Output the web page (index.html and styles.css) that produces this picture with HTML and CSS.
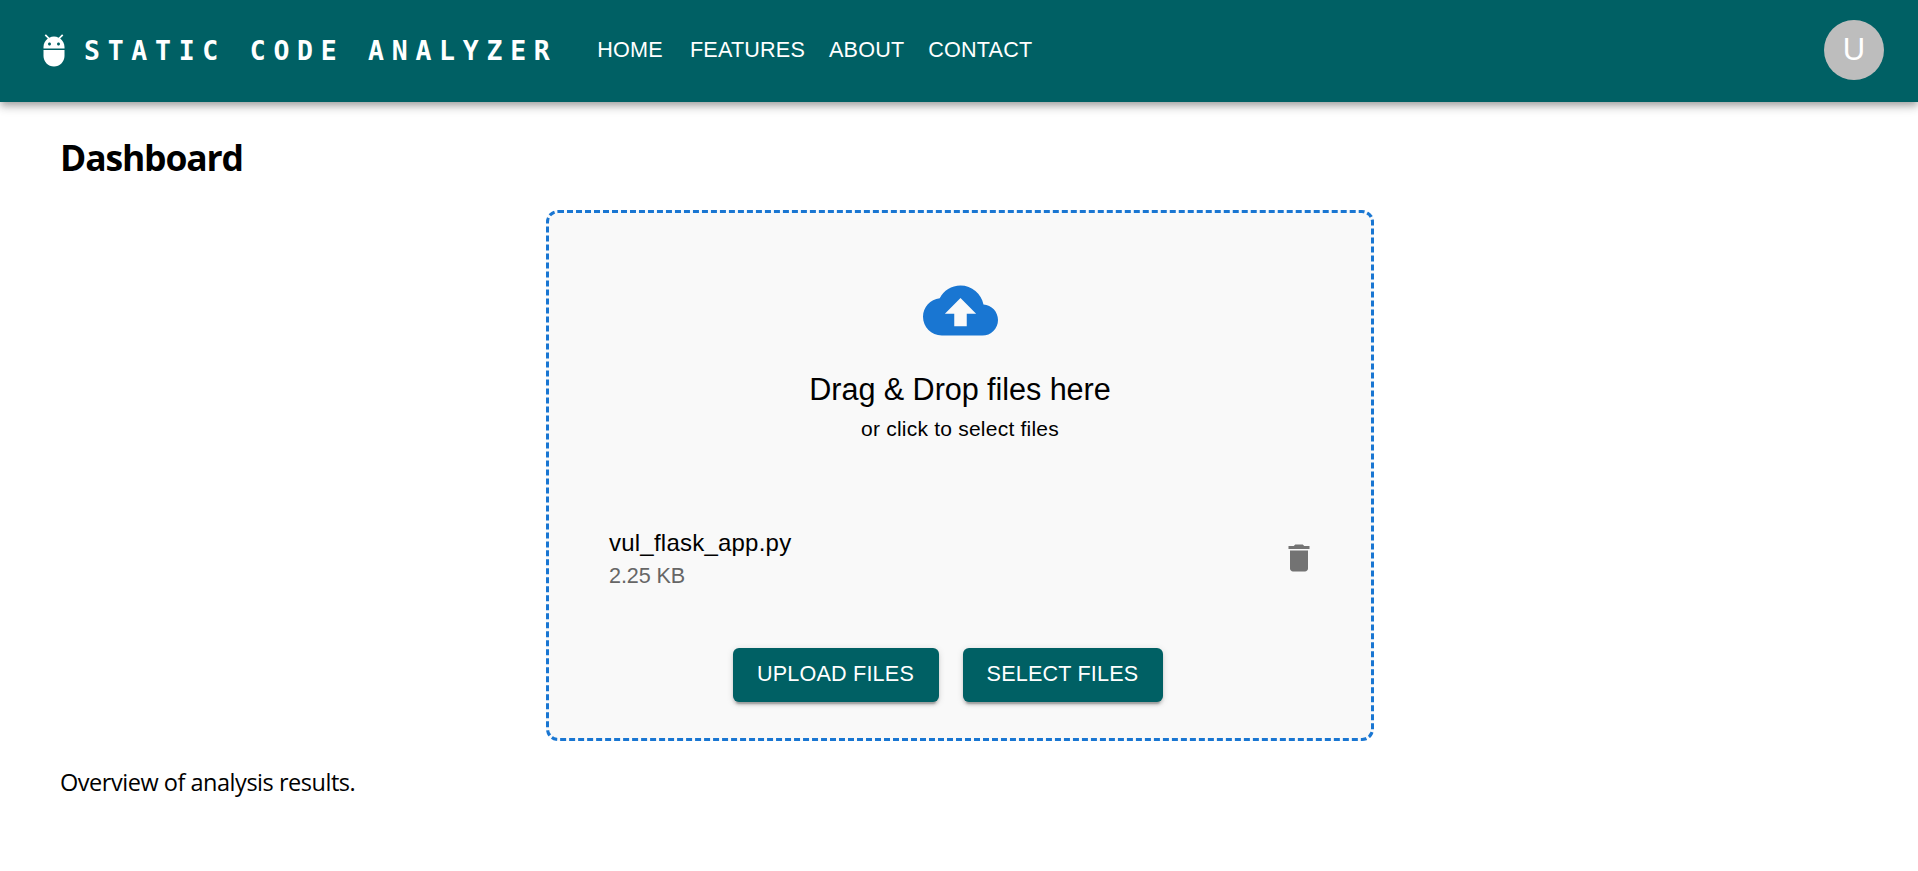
FILE: index.html
```html
<!DOCTYPE html>
<html lang="en">
<head>
<meta charset="utf-8">
<title>Static Code Analyzer</title>
<link rel="stylesheet" href="styles.css">
</head>
<body>
<header class="appbar">
  <svg class="logo-icon" viewBox="0 0 24 24"><path d="M5 16c0 3.87 3.13 7 7 7s7-3.13 7-7v-4H5v4zM16.12 4.37l2.1-2.1-.82-.83-2.3 2.31C14.16 3.28 13.12 3 12 3s-2.16.28-3.09.75L6.6 1.44l-.82.83 2.1 2.1C6.14 5.64 5 7.68 5 10v1h14v-1c0-2.32-1.14-4.36-2.88-5.63zM9 9c-.55 0-1-.45-1-1s.45-1 1-1 1 .45 1 1-.45 1-1 1zm6 0c-.55 0-1-.45-1-1s.45-1 1-1 1 .45 1 1-.45 1-1 1z"/></svg>
  <a class="brand">STATIC CODE ANALYZER</a>
  <nav class="nav">
    <a class="nav-link">HOME</a>
    <a class="nav-link">FEATURES</a>
    <a class="nav-link">ABOUT</a>
    <a class="nav-link">CONTACT</a>
  </nav>
  <div class="avatar">U</div>
</header>
<main class="content">
  <h1 class="title">Dashboard</h1>
  <section class="dropzone">
    <svg class="cloud" viewBox="0 0 24 24"><path d="M19.35 10.04C18.67 6.59 15.64 4 12 4 9.11 4 6.6 5.64 5.35 8.04 2.34 8.36 0 10.91 0 14c0 3.31 2.69 6 6 6h13c2.76 0 5-2.24 5-5 0-2.64-2.05-4.78-4.65-4.96zM14 13v4h-4v-4H7l5-5 5 5h-3z"/></svg>
    <p class="drop-title">Drag &amp; Drop files here</p>
    <p class="drop-hint">or click to select files</p>
    <div class="file">
      <div class="file-text">
        <div class="file-name">vul_flask_app.py</div>
        <div class="file-size">2.25 KB</div>
      </div>
      <svg class="trash" viewBox="0 0 24 24"><path d="M6 19c0 1.1.9 2 2 2h8c1.1 0 2-.9 2-2V7H6v12zM19 4h-3.5l-1-1h-5l-1 1H5v2h14V4z"/></svg>
    </div>
    <div class="actions">
      <button class="btn btn-upload">UPLOAD FILES</button>
      <button class="btn btn-select">SELECT FILES</button>
    </div>
  </section>
  <p class="overview">Overview of analysis results.</p>
</main>
</body>
</html>
```
FILE: styles.css
```css
* { box-sizing: border-box; }
body {
  margin: 0;
  background: #fff;
  color: #000;
  font-family: "Liberation Sans", Arial, sans-serif;
  overflow: hidden;
}
p, h1 { margin: 0; }
.appbar {
  display: flex;
  align-items: center;
  height: 102px;
  padding: 0 34px 2px 36px;
  background: #006064;
  color: #fff;
  box-shadow: 0 3px 6px -1.5px rgba(0,0,0,.2), 0 6px 7.5px 0 rgba(0,0,0,.14), 0 1.5px 15px 0 rgba(0,0,0,.12);
}
.logo-icon { width: 36px; height: 36px; margin-right: 12px; fill: #fff; }
.brand {
  width: 474px;
  margin-right: 24px;
  padding-top: 2px;
  font: 700 26.5px/48px "DejaVu Sans Mono", monospace;
  letter-spacing: 7.72px;
  white-space: nowrap;
}
.nav { display: flex; flex: 1; }
.nav-link {
  min-width: 96px;
  padding: 9px 12px;
  font-size: 21.6px;
  line-height: 36px;
  letter-spacing: .18px;
  text-align: center;
}
.avatar {
  width: 60px;
  height: 60px;
  border-radius: 50%;
  background: #bdbdbd;
  font-size: 31px;
  line-height: 59px;
  text-align: center;
}
.content { padding: 31px 60px 0; }
.title {
  font: 700 35.5px/48px "Open Sans", sans-serif;
  letter-spacing: -1.15px;
}
.dropzone {
  display: flex;
  flex-direction: column;
  align-items: center;
  width: 828px;
  height: 531px;
  margin: 29px 0 0 486px;
  padding: 60px 45px 0;
  border: 3px dashed #1976d2;
  border-radius: 12px;
  background: #f9f9f9;
}
.cloud { width: 75px; height: 75px; fill: #1976d2; }
.drop-title { margin: 17px 0 1px; font-size: 30.6px; line-height: 48px; letter-spacing: -.06px; }
.drop-hint { font-size: 21px; line-height: 30px; letter-spacing: .225px; }
.file {
  display: flex;
  justify-content: space-between;
  align-items: center;
  width: 100%;
  margin-top: 81px;
  padding: 0 9px 0 15px;
}
.file-name { font-size: 24px; line-height: 36px; letter-spacing: .225px; }
.file-size { font-size: 21.6px; line-height: 30px; letter-spacing: -.1px; color: #666; }
.trash { width: 36px; height: 36px; fill: #737373; }
.actions { display: flex; gap: 24px; width: 430px; margin: 57px 24px 0 0; }
.btn {
  height: 54px;
  padding: 0 1px 2px 0;
  border: 0;
  border-radius: 6px;
  background: #006064;
  color: #fff;
  font: 21.6px/52px "Liberation Sans", Arial, sans-serif;
  letter-spacing: .18px;
  box-shadow: 0 4.5px 1.5px -3px rgba(0,0,0,.2), 0 3px 3px 0 rgba(0,0,0,.14), 0 1.5px 7.5px 0 rgba(0,0,0,.12);
}
.btn-upload { width: 206px; }
.btn-select { width: 200px; }
.overview {
  margin-top: 23px;
  font: 23.5px/36px "Open Sans", sans-serif;
  letter-spacing: -.47px;
}
```
